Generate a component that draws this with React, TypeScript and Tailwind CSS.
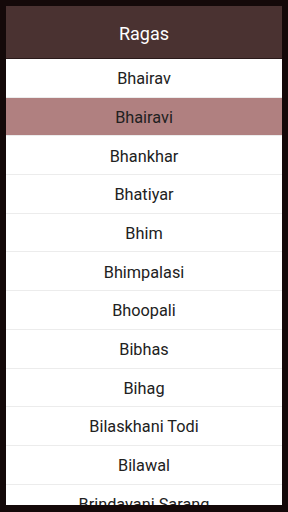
import React from "react";

const ragas = [
  "Bhairav",
  "Bhairavi",
  "Bhankhar",
  "Bhatiyar",
  "Bhim",
  "Bhimpalasi",
  "Bhoopali",
  "Bibhas",
  "Bihag",
  "Bilaskhani Todi",
  "Bilawal",
  "Brindavani Sarang",
  "Chandrakauns",
];

export default function App() {
  return (
    <div
      className="w-[288px] h-[512px] bg-[#140909] overflow-hidden pt-[6px] px-[6px] pb-[7px]"
      style={{ fontFamily: "Roboto, 'Liberation Sans', sans-serif" }}
    >
      <div className="w-full h-full flex flex-col bg-white overflow-hidden">
        <div className="h-[53px] shrink-0 bg-[#4a3231] flex items-center justify-center border-b border-[#2a1a1a] pt-[3px]">
          <span className="text-white text-[18px] leading-none">Ragas</span>
        </div>
        <div className="flex-1 overflow-hidden">
          {ragas.map((r, i) => (
            <div
              key={r}
              className={`h-[38.7px] flex items-center justify-center border-b border-[#ececec] pt-[3px] text-[16.3px] leading-none text-[#212121] ${
                i === 1 ? "bg-[#b08080] border-[#b08080]" : "bg-white"
              }`}
            >
              {r}
            </div>
          ))}
        </div>
      </div>
    </div>
  );
}
